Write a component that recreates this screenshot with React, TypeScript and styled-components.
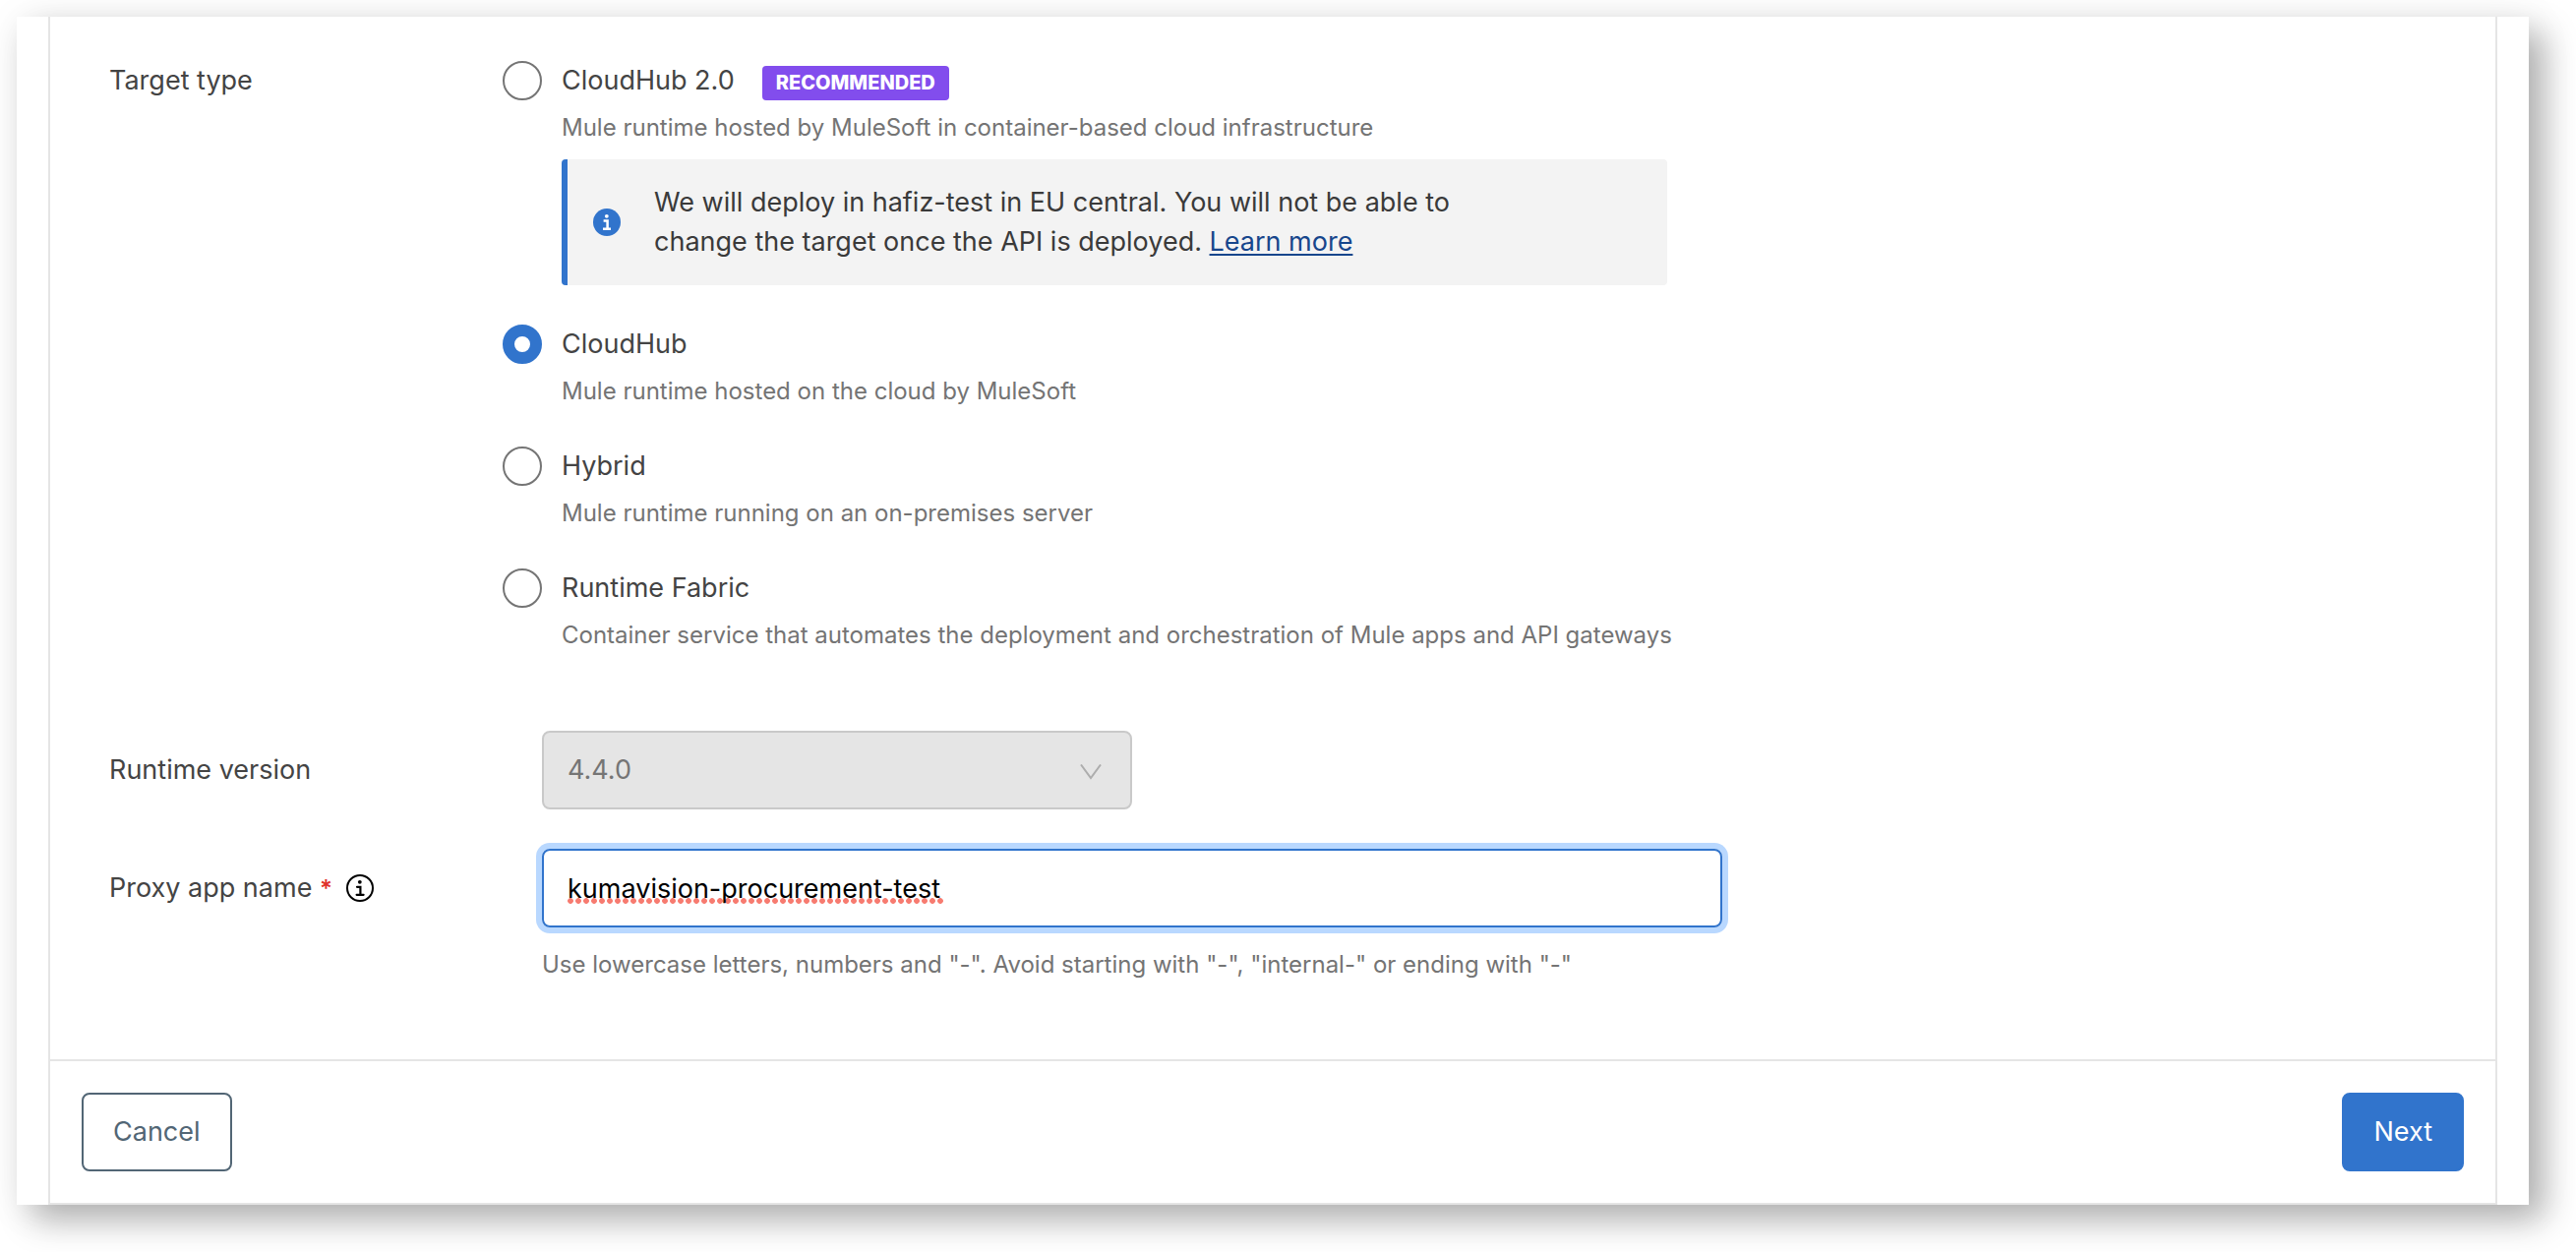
import React, { useState } from "react";
import styled, { createGlobalStyle } from "styled-components";

const GlobalStyle = createGlobalStyle`
  *, *::before, *::after { box-sizing: border-box; }
  body {
    margin: 0;
    background: #fff;
    color: #444;
    font-family: Inter, "Liberation Sans", sans-serif;
    font-size: 27px;
    line-height: 40px;
  }
`;

const Page = styled.div`
  padding: 17px 48px 48px 17px;
`;

const Sheet = styled.div`
  padding: 0 32px;
  background: #fff;
  box-shadow: 16px 16px 32px rgba(0, 0, 0, 0.28), 4px 4px 40px rgba(0, 0, 0, 0.08);
`;

const Form = styled.form`
  border: 2px solid #e5e5e5;
  border-top: 0;
`;

const Body = styled.div`
  padding: 45px 60px 78px;
`;

const Row = styled.div<{ $gap?: number }>`
  display: grid;
  grid-template-columns: 400px minmax(0, 1fr);
  margin-top: ${(p) => p.$gap ?? 0}px;
`;

const GroupLabel = styled.div``;

const FieldLabel = styled.div`
  display: flex;
  align-items: center;
  gap: 14px;
  height: 80px;
`;

const Required = styled.span`
  color: #e0312c;
  font-size: 24px;
  font-weight: 600;
`;

const HelpButton = styled.button`
  display: flex;
  padding: 0;
  border: 0;
  background: none;
  color: #000;
`;

const Options = styled.div`
  display: flex;
  flex-direction: column;
  gap: 38px;
`;

const Option = styled.div`
  display: grid;
  grid-template-columns: 40px minmax(0, 1fr);
  column-gap: 20px;
`;

const Radio = styled.input`
  appearance: none;
  width: 40px;
  height: 40px;
  margin: 0;
  border: 2px solid #757575;
  border-radius: 50%;
  background: #fff;
  &:checked {
    border: 12px solid #3174cc;
  }
`;

const OptionHead = styled.div`
  display: flex;
  align-items: baseline;
  gap: 28px;
`;

const Badge = styled.span`
  padding: 0 14px;
  border-radius: 4px;
  background: #824ded;
  color: #fff;
  font-size: 20px;
  font-weight: 800;
  line-height: 35px;
`;

const Hint = styled.p<{ $space?: number }>`
  grid-column: -2 / -1;
  margin: ${(p) => p.$space ?? 10}px 0 0;
  color: #747474;
  font-size: 24px;
  line-height: 36px;
`;

const Notice = styled.div`
  grid-column: 2;
  display: flex;
  align-items: center;
  gap: 34px;
  max-width: 1124px;
  margin: 14px 0 2px;
  padding: 24px 26px;
  border-left: 6px solid #3174cc;
  border-radius: 4px;
  background: #f3f3f3;
  color: #3a3a3a;
`;

const NoticeText = styled.p`
  margin: 0;
  max-width: 840px;
`;

const Link = styled.a`
  color: #17468c;
  text-decoration: underline;
  text-decoration-thickness: 2px;
  text-underline-offset: 3px;
  text-decoration-skip-ink: none;
`;

const Control = styled.div<{ $width: number }>`
  position: relative;
  z-index: 0;
  max-width: ${(p) => p.$width}px;
`;

const FieldBody = styled.div`
  padding-left: 40px;
`;

const Select = styled.select`
  appearance: none;
  display: block;
  width: 100%;
  height: 80px;
  padding: 0 24px;
  border: 2px solid #c9c9c9;
  border-radius: 8px;
  background: #e5e5e5;
  color: #757575;
  font: inherit;
  opacity: 1;
`;

const Chevron = styled.svg`
  position: absolute;
  top: 34px;
  right: 31px;
  pointer-events: none;
`;

const TextInput = styled.input`
  display: block;
  width: 100%;
  height: 80px;
  padding: 0 24px;
  border: 2px solid #3174cc;
  border-radius: 8px;
  outline: 0;
  background: transparent;
  box-shadow: 0 0 0 6px #b9d8ff;
  color: #000;
  font: inherit;
`;

const SpellingMark = styled.span`
  position: absolute;
  z-index: -1;
  top: 50px;
  left: 26px;
  width: 382px;
  height: 6px;
  background: radial-gradient(circle at 3px 3px, #f77b70 2.5px, transparent 3.2px) 0 0 / 8px 6px repeat-x;
`;

const Footer = styled.footer`
  display: flex;
  justify-content: space-between;
  padding: 32px;
  border-top: 2px solid #e5e5e5;
`;

const Button = styled.button<{ $primary?: boolean }>`
  height: 80px;
  padding: 0 30px;
  border: 2px solid ${(p) => (p.$primary ? "#3174cc" : "#526675")};
  border-radius: 8px;
  background: ${(p) => (p.$primary ? "#3174cc" : "#fff")};
  color: ${(p) => (p.$primary ? "#fff" : "#526675")};
  font: inherit;
`;

const InfoSolid = () => (
  <svg width="28" height="28" viewBox="0 0 28 28" fill="none" aria-hidden="true">
    <circle cx="14" cy="14" r="14" fill="#3174cc" />
    <circle cx="13.8" cy="7.8" r="1.9" fill="#fff" />
    <path d="M10.6 12.6h4v8M10 20.8h8" stroke="#fff" strokeWidth="2.5" />
  </svg>
);

const InfoOutline = () => (
  <svg width="28" height="28" viewBox="0 0 28 28" fill="none" aria-hidden="true">
    <circle cx="14" cy="14" r="13" stroke="currentColor" strokeWidth="2" />
    <circle cx="13.8" cy="7.8" r="1.9" fill="currentColor" />
    <path
      d="M11 12.8h3.4v7.8M10.6 20.8h7"
      stroke="currentColor"
      strokeWidth="2.2"
      strokeLinecap="round"
    />
  </svg>
);

type Target = { id: string; title: string; text: string; recommended?: boolean };

const targets: Target[] = [
  {
    id: "cloudhub2",
    title: "CloudHub 2.0",
    text: "Mule runtime hosted by MuleSoft in container-based cloud infrastructure",
    recommended: true,
  },
  { id: "cloudhub", title: "CloudHub", text: "Mule runtime hosted on the cloud by MuleSoft" },
  { id: "hybrid", title: "Hybrid", text: "Mule runtime running on an on-premises server" },
  {
    id: "rtf",
    title: "Runtime Fabric",
    text: "Container service that automates the deployment and orchestration of Mule apps and API gateways",
  },
];

export default function App() {
  const [target, setTarget] = useState("cloudhub");
  const [name, setName] = useState("kumavision-procurement-test");

  return (
    <>
      <GlobalStyle />
      <Page>
        <Sheet>
          <Form onSubmit={(e) => e.preventDefault()}>
            <Body>
              <Row role="radiogroup" aria-labelledby="target-label">
                <GroupLabel id="target-label">Target type</GroupLabel>
                <Options>
                  {targets.map((t) => (
                    <Option key={t.id}>
                      <Radio
                        type="radio"
                        name="target"
                        id={t.id}
                        checked={target === t.id}
                        onChange={() => setTarget(t.id)}
                      />
                      <OptionHead>
                        <label htmlFor={t.id}>{t.title}</label>
                        {t.recommended && <Badge>RECOMMENDED</Badge>}
                      </OptionHead>
                      <Hint>{t.text}</Hint>
                      {t.recommended && (
                        <Notice>
                          <InfoSolid />
                          <NoticeText>
                            We will deploy in hafiz-test in EU central. You will not be able to change the
                            target once the API is deployed. <Link href="#learn-more">Learn more</Link>
                          </NoticeText>
                        </Notice>
                      )}
                    </Option>
                  ))}
                </Options>
              </Row>

              <Row $gap={79}>
                <FieldLabel>
                  <label htmlFor="runtime">Runtime version</label>
                </FieldLabel>
                <FieldBody>
                  <Control $width={600}>
                    <Select id="runtime" disabled>
                      <option>4.4.0</option>
                    </Select>
                    <Chevron width="22" height="16" viewBox="0 0 22 16" fill="none" aria-hidden="true">
                      <path d="M1 0.5 11 14 21 0.5" stroke="#adadad" strokeWidth="2" />
                    </Chevron>
                  </Control>
                </FieldBody>
              </Row>

              <Row $gap={40}>
                <FieldLabel>
                  <label htmlFor="app-name">
                    Proxy app name <Required>*</Required>
                  </label>
                  <HelpButton type="button" aria-label="About the proxy app name">
                    <InfoOutline />
                  </HelpButton>
                </FieldLabel>
                <FieldBody>
                  <Control $width={1200}>
                    <SpellingMark />
                    <TextInput
                      id="app-name"
                      value={name}
                      spellCheck={false}
                      onChange={(e) => setName(e.target.value)}
                    />
                  </Control>
                  <Hint $space={20}>
                    Use lowercase letters, numbers and "-". Avoid starting with "-", "internal-" or ending with
                    "-"
                  </Hint>
                </FieldBody>
              </Row>
            </Body>
            <Footer>
              <Button type="button">Cancel</Button>
              <Button type="submit" $primary>
                Next
              </Button>
            </Footer>
          </Form>
        </Sheet>
      </Page>
    </>
  );
}
